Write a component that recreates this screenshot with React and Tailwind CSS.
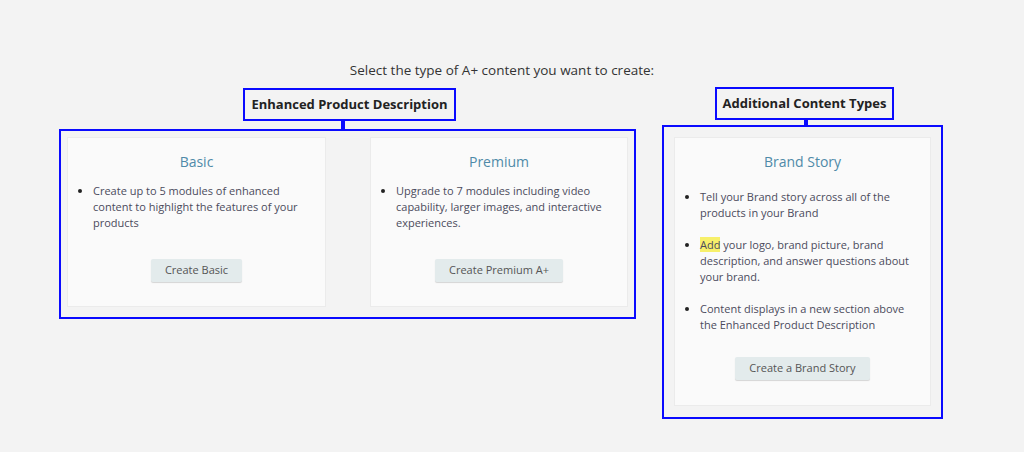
export default function App() {
  const font = { fontFamily: '"Open Sans", "Liberation Sans", sans-serif' };
  const Card = ({ title, items, button, className, spaced, listTop, btnBottom }) => (
    <div className={`flex flex-col items-center bg-[#fafafa] border border-[#ebebeb] ${className}`}>
      <div className="mt-[14px] text-[14px] leading-[20px] text-[#4f8aa8]">{title}</div>
      <ul className={`${listTop} self-stretch pl-[25px] pr-[14px] list-disc marker:text-[#222] text-[11px] leading-[16px] text-[#4b4b5c] ${spaced ? 'space-y-[16px]' : ''}`}>
        {items.map((it, i) => (
          <li key={i}>{it}</li>
        ))}
      </ul>
      <button className={`mt-auto ${btnBottom} h-[23px] px-[14px] bg-[#e3ebec] text-[11px] text-[#555] rounded-[2px] shadow-[0_1px_1px_rgba(0,0,0,0.15)]`}>
        {button}
      </button>
    </div>
  );
  return (
    <div style={font} className="w-[1024px] h-[452px] bg-[#f3f3f3] overflow-hidden">
      <div className="pt-[61px] text-center text-[13.5px] leading-[18px] text-[#333] -ml-[20px]">
        Select the type of A+ content you want to create:
      </div>
      <div className="flex items-start pl-[59px] mt-[9px] gap-[26px]">
        <div className="flex flex-col items-center">
          <div className="h-[33px] px-[6px] border-2 border-[#0a0aff] flex items-center text-[13px] font-bold text-[#222] ml-[4px]">
            Enhanced Product Description
          </div>
          <div className="w-[4px] h-[8px] bg-[#0a0aff] -ml-[9px]"></div>
          <div className="w-[577px] h-[190px] border-2 border-[#0a0aff] flex gap-[44px] pl-[6px] pt-[6px]">
            <Card
              className="w-[259px] h-[170px]"
              listTop="mt-[11px]"
              btnBottom="mb-[24px]"
              title="Basic"
              items={["Create up to 5 modules of enhanced content to highlight the features of your products"]}
              button="Create Basic"
            />
            <Card
              className="w-[258px] h-[170px]"
              listTop="mt-[11px]"
              btnBottom="mb-[24px]"
              title="Premium"
              items={["Upgrade to 7 modules including video capability, larger images, and interactive experiences."]}
              button="Create Premium A+"
            />
          </div>
        </div>
        <div className="flex flex-col items-center -mt-[1px]">
          <div className="h-[33px] px-[6px] border-2 border-[#0a0aff] flex items-center text-[13px] font-bold text-[#222] ml-[4px]">
            Additional Content Types
          </div>
          <div className="w-[4px] h-[5px] bg-[#0a0aff] ml-[6px]"></div>
          <div className="w-[281px] h-[294px] border-2 border-[#0a0aff] pl-[10px] pt-[10px]">
            <Card
              className="w-[257px] h-[269px]"
              listTop="mt-[17px]"
              btnBottom="mb-[25px]"
              spaced
              title="Brand Story"
              items={[
                "Tell your Brand story across all of the products in your Brand",
                <span key="a"><span className="bg-[#f7f06a]">Add</span> your logo, brand picture, brand description, and answer questions about your brand.</span>,
                "Content displays in a new section above the Enhanced Product Description",
              ]}
              button="Create a Brand Story"
            />
          </div>
        </div>
      </div>
    </div>
  );
}
